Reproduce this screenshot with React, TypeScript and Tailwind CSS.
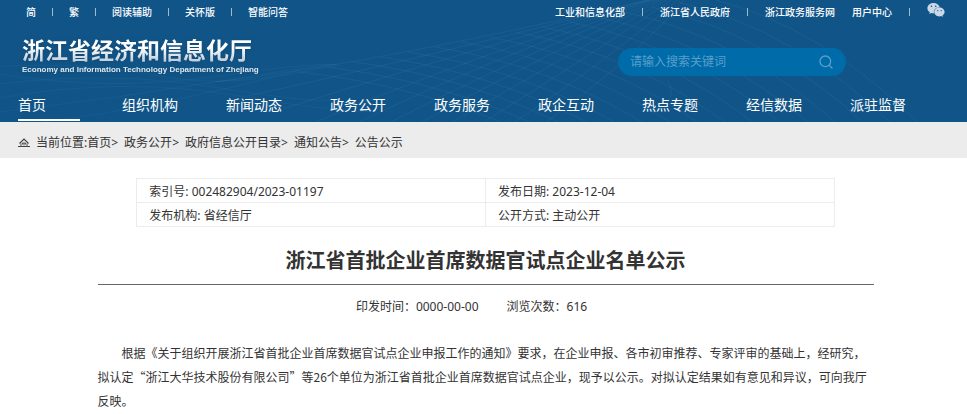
import type { ReactNode } from 'react';
import { Search } from 'lucide-react';
import { FaWeixin } from 'react-icons/fa';

const toolLinks = ['简', '繁', '阅读辅助', '关怀版', '智能问答'];

const navItems = [
  '首页',
  '组织机构',
  '新闻动态',
  '政务公开',
  '政务服务',
  '政企互动',
  '热点专题',
  '经信数据',
  '派驻监督',
];

const crumbs = ['首页', '政务公开', '政府信息公开目录', '通知公告', '公告公示'];

const infoRows = [
  [
    { label: '索引号', value: '002482904/2023-01197' },
    { label: '发布日期', value: '2023-12-04' },
  ],
  [
    { label: '发布机构', value: '省经信厅' },
    { label: '公开方式', value: '主动公开' },
  ],
];

// Curves that climb from the bottom edge and meet near the top right
const risingCurves = Array.from({ length: 11 }, (_, i) => {
  const x = 215 + i * 32;
  const y = i < 4 ? 82 + i * 14 : 130;
  return `M${x} ${y} Q${x + 170 - i * 6} ${62 - i} ${665 + i * 3} ${-4 - i}`;
});

// Curves that leave the upper edge of the mesh and fall to the right
const fallingCurves = Array.from({ length: 16 }, (_, i) => {
  const x = 300 + i * 27;
  const y = 72 - i * 5;
  return `M${x} ${y} Q${x + 120} ${y + 14 + i} ${x + 220} 130`;
});

function HeaderMesh() {
  return (
    <svg
      className="absolute inset-0 h-full w-full"
      viewBox="0 0 967 122"
      preserveAspectRatio="none"
      fill="none"
      stroke="#5fa3d0"
      strokeOpacity="0.11"
      aria-hidden="true"
    >
      {risingCurves.map((d) => (
        <path key={d} d={d} />
      ))}
      {fallingCurves.map((d) => (
        <path key={d} d={d} />
      ))}
      <g strokeOpacity="0.08">
        <path d="M0 66Q90 62 160 76T330 66" />
        <path d="M0 74Q110 92 220 76T340 66" />
        <path d="M0 84Q110 70 220 88T340 98" />
        <path d="M0 98Q120 76 240 96T380 110" />
        <path d="M0 112Q120 98 240 78T330 68" />
        <path d="M30 124Q160 108 300 70" />
      </g>
      <path d="M667 80Q676 92 667 103" />
    </svg>
  );
}

function Divider() {
  return <span className="h-2 w-px bg-white/60" aria-hidden="true" />;
}

function TopLink({ children }: { children: ReactNode }) {
  return (
    <a href="#" className="whitespace-nowrap">
      {children}
    </a>
  );
}

function TopBar() {
  return (
    <div className="flex h-6 items-center justify-between pr-[22px] pl-[26px] text-[10px] font-medium">
      <div className="flex items-center gap-4">
        {toolLinks.map((label, i) => (
          <div key={label} className="flex items-center gap-4">
            {i > 0 && <Divider />}
            <TopLink>{label}</TopLink>
          </div>
        ))}
      </div>
      <div className="flex items-center gap-[17px]">
        <TopLink>工业和信息化部</TopLink>
        <Divider />
        <TopLink>浙江省人民政府</TopLink>
        <Divider />
        <TopLink>浙江政务服务网</TopLink>
        <TopLink>用户中心</TopLink>
        <Divider />
        <a href="#" aria-label="微信" className="pb-1">
          <FaWeixin className="h-[18px] w-[18px] text-[#c9d7e6]" />
        </a>
      </div>
    </div>
  );
}

function Header() {
  return (
    <header className="relative bg-[#115588] text-white">
      <HeaderMesh />
      <div className="relative">
        <TopBar />
        <div className="flex h-16 items-end justify-between pr-[121px] pb-3 pl-[22px]">
          <a href="#" className="block drop-shadow-sm">
            <span className="block bg-gradient-to-b from-white from-40% to-[#b4c4d2] bg-clip-text text-[23px] leading-7 font-bold text-transparent">
              浙江省经济和信息化厅
            </span>
            <span className="block font-['Liberation_Sans',sans-serif] text-[8px] leading-3 font-bold text-[#dce6ee]">
              Economy and Information Technology Department of Zhejiang
            </span>
          </a>
          <form
            className="flex h-7 w-[228px] items-center rounded-full bg-[#006ba9] px-3"
            onSubmit={(e) => e.preventDefault()}
          >
            <input
              type="text"
              aria-label="搜索"
              placeholder="请输入搜索关键词"
              className="min-w-0 flex-1 bg-transparent text-xs outline-none placeholder:text-[#5a9fca]"
            />
            <button type="submit" aria-label="提交搜索">
              <Search className="h-4 w-4 text-[#5a9fca]" strokeWidth={2} />
            </button>
          </form>
        </div>
        <nav className="flex h-[34px] pl-[18px] text-sm">
          {navItems.map((item, i) => (
            <a key={item} href="#" className="flex w-26 shrink-0 flex-col justify-between pt-[7px]">
              <span className="leading-5">{item}</span>
              {i === 0 && <span className="mb-px h-0.5 w-[62px] bg-white" />}
            </a>
          ))}
        </nav>
      </div>
    </header>
  );
}

function HomeIcon() {
  return (
    <svg className="h-3 w-3" viewBox="0 0 12 12" fill="none" stroke="#444" aria-hidden="true">
      <path d="M1.500 6.500 6 2l4.500 4.500" strokeWidth="1.200" />
      <path d="M3 6.500v2.500M9 6.500v2.500M4.500 7.500v-1.500h3v1.500M6 6v2.500" strokeWidth="0.900" />
      <path d="M0 9.500h12" />
    </svg>
  );
}

function Breadcrumb() {
  return (
    <nav className="flex h-9 items-center bg-[#ececec] pt-1.5 pl-[18px] text-xs">
      <HomeIcon />
      <span className="ml-1.5">当前位置:</span>
      {crumbs.map((crumb, i) => (
        <span key={crumb} className="mr-1.5">
          <a href="#">{crumb}</a>
          {i < crumbs.length - 1 && '>'}
        </span>
      ))}
    </nav>
  );
}

function InfoTable() {
  return (
    <table className="mx-auto w-[90%] table-fixed border-collapse text-xs">
      <tbody>
        {infoRows.map((row) => (
          <tr key={row[0].label} className="h-6">
            {row.map((cell) => (
              <td key={cell.label} className="border border-[#ececec] px-3 pt-0.5 leading-5">
                {cell.label}: {cell.value}
              </td>
            ))}
          </tr>
        ))}
      </tbody>
    </table>
  );
}

export default function App() {
  return (
    <div
      lang="zh-CN"
      className="bg-white font-['Noto_Sans','Noto_Sans_CJK_SC',sans-serif] text-[#333]"
    >
      <Header />
      <Breadcrumb />
      <main className="pt-5 pl-1">
        <article className="mx-auto w-full max-w-[776px]">
          <InfoTable />
          <h1 className="mt-[18px] border-b border-[#666] pb-[7px] text-center text-xl leading-8 font-bold">
            浙江省首批企业首席数据官试点企业名单公示
          </h1>
          <div className="mt-3 flex justify-center text-xs leading-5">
            <span className="mr-7">印发时间：0000-00-00</span>
            <span className="mr-7">浏览次数：616</span>
          </div>
          <p className="mt-6 indent-[2em] font-['Noto_Sans_CJK_SC',sans-serif] text-xs leading-6">
            根据《关于组织开展浙江省首批企业首席数据官试点企业申报工作的通知》要求，在企业申报、各市初审推荐、专家评审的基础上，经研究，拟认定“浙江大华技术股份有限公司”等26个单位为浙江省首批企业首席数据官试点企业，现予以公示。对拟认定结果如有意见和异议，可向我厅反映。
          </p>
        </article>
      </main>
    </div>
  );
}
